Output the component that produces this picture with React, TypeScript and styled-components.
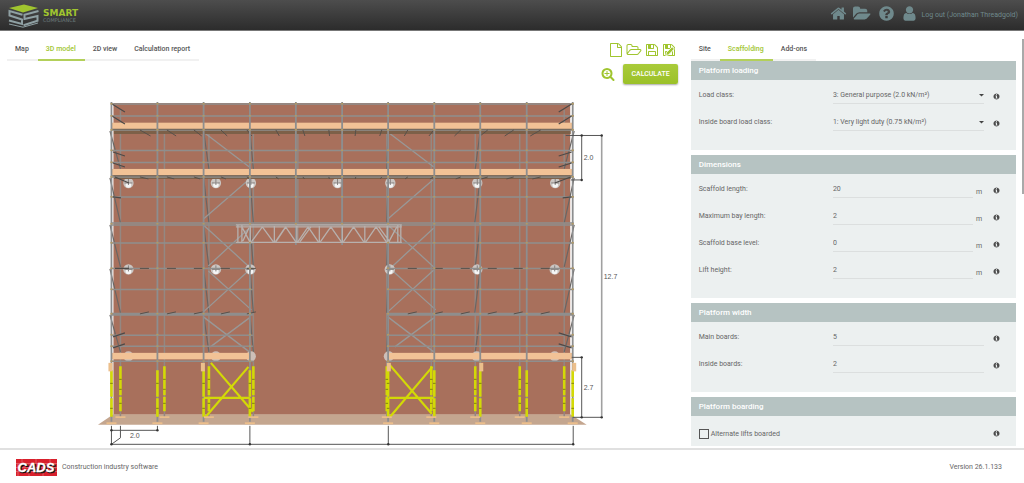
import React, { useState } from 'react';
import styled, { createGlobalStyle } from 'styled-components';

const GlobalStyle = createGlobalStyle`
  * { box-sizing: border-box; }
  body {
    margin: 0;
    background: #fff;
    color: #666;
    font-family: Roboto, "Liberation Sans", sans-serif;
    font-size: 7px;
    line-height: 9px;
  }
  button, input, select { font: inherit; color: inherit; }
`;

const green = '#a0c52f';

/* ---------- icons (1792 unit grid) ---------- */

const ring = 'm640 416q0 209-103 385.500t-279.500 279.500-385.500 103-385.500-103-279.500-279.500-103-385.500 103-385.500 279.500-279.500 385.500-103 385.500 103 279.500 279.500 103 385.500z';

const paths = {
  home: 'M1472 992v480q0 26-19 45t-45 19h-384v-384h-256v384h-384q-26 0-45-19t-19-45v-480q0-1 .5-3t.5-3l575-474 575 474q1 2 1 6zm223-69l-62 74q-8 9-21 11h-3q-13 0-21-7l-692-577-692 577q-12 8-24 7-13-2-21-11l-62-74q-8-10-7-23.500t11-21.500l719-599q32-26 76-26t76 26l244 204v-195q0-14 9-23t23-9h192q14 0 23 9t9 23v408l219 182q10 8 11 21.500t-7 23.500z',
  folder: 'M1879 952q0 31-31 66l-336 396q-43 51-120.500 86.500t-143.500 35.500h-1088q-34 0-60.500-13t-26.500-43q0-31 31-66l336-396q43-51 120.500-86.500t143.500-35.500h1088q34 0 60.500 13t26.500 43zm-343-344v160h-832q-94 0-197 47.500t-164 119.500l-337 396-5 6q0-4-.5-12.500t-.5-12.500v-960q0-92 66-158t158-66h320q92 0 158 66t66 158v32h544q92 0 158 66t66 158z',
  question: 'M1024 1376v-192q0-14-9-23t-23-9h-192q-14 0-23 9t-9 23v192q0 14 9 23t23 9h192q14 0 23-9t9-23zm256-672q0-88-55.500-163t-138.500-116-170-41q-243 0-371 213-15 24 8 42l132 100q7 6 19 6 16 0 25-12 53-68 86-92 34-24 86-24 48 0 85.500 26t37.500 59q0 38-20 61t-68 45q-63 28-115.500 86.500t-52.500 125.500v36q0 14 9 23t23 9h192q14 0 23-9t9-23q0-19 21.500-49.500t54.500-49.500q32-18 49-28.500t46-35 44.500-48 28-60.500 12.500-81zm384 192q0 209-103 385.500t-279.500 279.500-385.500 103-385.500-103-279.500-279.500-103-385.500 103-385.500 279.500-279.500 385.500-103 385.500 103 279.500 279.500 103 385.500z',
  user: 'M1536 1399q0 109-62.500 187t-150.500 78h-854q-88 0-150.500-78t-62.500-187q0-85 8.500-160.500t31.500-152 58.500-131 94-89 134.500-34.500q131 128 313 128t313-128q76 0 134.500 34.500t94 89 58.500 131 31.500 152 8.500 160.500zm-256-887q0 159-112.500 271.500t-271.500 112.500-271.500-112.500-112.500-271.500 112.500-271.500 271.500-112.500 271.500 112.500 112.500 271.500z',
  info: 'M1152 1376v-160q0-14-9-23t-23-9h-96v-512q0-14-9-23t-23-9h-320q-14 0-23 9t-9 23v160q0 14 9 23t23 9h96v320h-96q-14 0-23 9t-9 23v160q0 14 9 23t23 9h448q14 0 23-9t9-23zm-128-896v-160q0-14-9-23t-23-9h-192q-14 0-23 9t-9 23v160q0 14 9 23t23 9h192q14 0 23-9t9-23z' + ring,
  file: 'M1596 380q28 28 48 76t20 88v1152q0 40-28 68t-68 28h-1344q-40 0-68-28t-28-68v-1600q0-40 28-68t68-28h896q40 0 88 20t76 48zm-444-244v376h376q-10-29-22-41l-313-313q-12-12-41-22zm384 1528v-1024h-416q-40 0-68-28t-28-68v-416h-768v1536h1280z',
  folderOutline: 'M1845 931q0-35-53-35h-1088q-40 0-85.500 21.500t-71.500 52.500l-294 363q-18 24-18 40 0 35 53 35h1088q40 0 86-22t71-53l294-363q18-22 18-39zm-1141-163h768v-160q0-40-28-68t-68-28h-576q-40 0-68-28t-28-68v-64q0-40-28-68t-68-28h-320q-40 0-68 28t-28 68v853l256-315q44-53 116-87.500t140-34.500zm1269 163q0 62-46 120l-295 363q-43 53-116 87.500t-140 34.500h-1088q-92 0-158-66t-66-158v-960q0-92 66-158t158-66h320q92 0 158 66t66 158v32h544q92 0 158 66t66 158v160h192q54 0 99 24.500t67 70.500q15 32 15 68z',
  save: 'M512 1536h768v-384h-768v384zm896 0h128v-896q0-14-10-38.500t-20-34.500l-281-281q-10-10-34-20t-39-10v416q0 40-28 68t-68 28h-576q-40 0-68-28t-28-68v-416h-128v1280h128v-416q0-40 28-68t68-28h832q40 0 68 28t28 68v416zm-384-928v-320q0-13-9.500-22.500t-22.500-9.500h-192q-13 0-22.500 9.500t-9.500 22.500v320q0 13 9.500 22.500t22.500 9.500h192q13 0 22.500-9.500t9.500-22.500zm640 32v928q0 40-28 68t-68 28h-1344q-40 0-68-28t-28-68v-1344q0-40 28-68t68-28h928q40 0 88 20t76 48l280 280q28 28 48 76t20 88z',
  zoomIn: 'M1088 800v64q0 13-9.500 22.500t-22.500 9.500h-224v224q0 13-9.500 22.500t-22.500 9.500h-64q-13 0-22.500-9.500t-9.500-22.500v-224h-224q-13 0-22.500-9.500t-9.500-22.500v-64q0-13 9.500-22.500t22.500-9.500h224v-224q0-13 9.500-22.500t22.500-9.500h64q13 0 22.500 9.500t9.500 22.500v224h224q13 0 22.500 9.500t9.500 22.500zm128 32q0-185-131.500-316.500t-316.500-131.500-316.500 131.500-131.500 316.500 131.500 316.500 316.500 131.500 316.500-131.500 131.500-316.500zm512 832q0 53-37.500 90.500t-90.500 37.500q-54 0-90-38l-343-342q-179 124-399 124-143 0-273.500-55.500t-225-150-150-225-55.500-273.500 55.500-273.500 150-225 225-150 273.500-55.500 273.500 55.500 225 150 150 225 55.500 273.500q0 220-124 399l343 343q37 37 37 90z',
};

type IconName = keyof typeof paths;

function Icon({ name, size, wide = false, children }: { name: IconName; size: number; wide?: boolean; children?: React.ReactNode }) {
  const units = wide ? 2048 : 1792;
  return (
    <svg width={Math.round((size * units) / 1792)} height={size} viewBox={`0 0 ${units} 1792`} fill="currentColor" aria-hidden="true">
      <path d={paths[name]} />
      {children}
    </svg>
  );
}

/* ---------- shell ---------- */

const Shell = styled.div`
  display: flex;
  flex-direction: column;
  height: 100vh;
`;

const TopBar = styled.header`
  display: flex;
  flex: none;
  align-items: flex-start;
  justify-content: space-between;
  height: 31px;
  padding: 2px 6px 0 8px;
  background: linear-gradient(#4d4d4d, #2c2c2c);
  border-bottom: 1px solid #777;
`;

const TopNav = styled.nav`
  display: flex;
  align-items: center;
  gap: 6px;
  height: 22px;
`;

const TopLink = styled.a`
  display: flex;
  align-items: center;
  gap: 4px;
  color: #6f898c;
  text-decoration: none;
  svg { display: block; }
`;

const LinkText = styled.span`
  padding-top: 5px;
`;

const Workspace = styled.main`
  display: grid;
  flex: 1;
  grid-template-columns: minmax(0, 2fr) minmax(0, 1fr);
  min-height: 0;
  padding: 7px 0 2px;
`;

const ModelPane = styled.section`
  min-height: 0;
  overflow: hidden;
`;

const PaneHead = styled.div`
  display: flex;
  justify-content: space-between;
  padding: 0 7px;
`;

const TabBar = styled.div`
  display: flex;
`;

const Tab = styled.button<{ $active?: boolean }>`
  height: 23px;
  padding: 2px 9px 0 8px;
  background: none;
  border: 0;
  border-bottom: 2px solid ${(p) => (p.$active ? '#b3d05a' : '#f1f1f1')};
  color: ${(p) => (p.$active ? green : '#555')};
  font-weight: 500;
  cursor: pointer;
`;

const Tools = styled.div`
  display: flex;
  align-items: center;
  gap: 3px;
`;

const ToolButton = styled.button`
  display: flex;
  padding: 0;
  background: none;
  border: 0;
  color: ${green};
  cursor: pointer;
`;

const ActionRow = styled.div`
  display: flex;
  align-items: center;
  justify-content: flex-end;
  gap: 8px;
  margin: 3px 5px 6px 0;
`;

const CalculateButton = styled.button`
  height: 20px;
  padding: 0 8px;
  background: linear-gradient(#a9cb3a, #9bc128);
  border: 0;
  border-radius: 2px;
  box-shadow: 0 1px 2px rgba(0, 0, 0, 0.35);
  color: #fff;
  font-weight: 500;
  cursor: pointer;
`;

const Drawing = styled.svg`
  display: block;
  width: 100%;
  height: auto;
`;

const SettingsPane = styled.section`
  display: flex;
  gap: 6px;
  min-height: 0;
  padding-left: 8px;
`;

const SettingsScroll = styled.div`
  flex: 1;
  min-width: 0;
  overflow-y: auto;
  scrollbar-width: none;
`;

const ScrollRail = styled.div`
  width: 2px;
  padding-top: 1px;
`;

const ScrollThumb = styled.div`
  height: 38%;
  background: #a9a9a9;
`;

const Group = styled.section`
  margin-bottom: 5px;
  background: #ecf0f0;
`;

const GroupTitle = styled.h2`
  height: 19px;
  margin: 0;
  padding: 0 8px;
  background: #b6c3c2;
  color: #fff;
  font-size: 8px;
  font-weight: 500;
  line-height: 19px;
`;

const GroupBody = styled.div`
  padding: 2px 16px 14px 8px;
`;

const Row = styled.div`
  display: grid;
  grid-template-columns: minmax(0, 8fr) minmax(0, 9fr) 16px;
  align-items: center;
  height: 27px;
`;

const CheckRow = styled.div`
  display: flex;
  align-items: center;
  justify-content: space-between;
  height: 32px;
`;

const CheckLabel = styled.label`
  display: flex;
  align-items: center;
  gap: 2px;
`;

const CheckBox = styled.input`
  width: 10px;
  height: 10px;
  margin: 0;
  appearance: none;
  border: 1px solid #555;
  &:checked { background: ${green}; }
`;

const Field = styled.div`
  display: flex;
  align-items: center;
`;

const TextInput = styled.input`
  flex: 1;
  min-width: 0;
  height: 17px;
  padding: 0;
  background: none;
  border: 0;
  border-bottom: 1px solid #dcdfdf;
  outline: 0;
`;

const Unit = styled.span`
  width: 11px;
  padding: 5px 0 0 3px;
`;

const SelectInput = styled.select`
  flex: 1;
  min-width: 0;
  height: 17px;
  padding: 0;
  appearance: none;
  background: none;
  border: 0;
  border-bottom: 1px solid #dcdfdf;
  outline: 0;
`;

const SelectField = styled.div`
  display: grid;
  > * { grid-area: 1 / 1; }
  > svg {
    align-self: center;
    justify-self: end;
    pointer-events: none;
  }
`;

const InfoButton = styled.button<{ $raised?: boolean }>`
  display: flex;
  justify-content: flex-end;
  padding: ${(p) => (p.$raised ? '0 0 2px' : '2px 0 0')};
  background: none;
  border: 0;
  color: #4c4c4c;
`;

const BottomBar = styled.footer`
  display: flex;
  flex: none;
  align-items: center;
  justify-content: space-between;
  height: 35px;
  padding: 2px 22px 0 16px;
  border-top: 2px solid #e0e0e0;
`;

const Company = styled.div`
  display: flex;
  align-items: center;
  gap: 5px;
`;

/* ---------- logos ---------- */

function SmartLogo() {
  return (
    <svg width="74" height="26" viewBox="0 0 74 26" role="img" aria-label="Smart Compliance">
      <path d="M1 6 16 2.500l14 3.500-15 4.500z" fill={green} />
      <g fill="none" stroke="#8fa0a3" strokeWidth="2">
        <path d="M14.500 12.700 1.500 9v4.500l12.500 4V22L1 18.500" />
        <path d="M30.500 9 16.500 12.700V17l13-3v4.700l-14 4.500" />
        <path d="m1 22 14 3.200L30 21" strokeWidth="1" />
      </g>
      <text x="35" y="14" fill={green} fontFamily="DejaVu Sans, sans-serif" fontSize="9" fontWeight="700">SMART</text>
      <text x="35" y="20" fill="#6c7b7e" fontFamily="DejaVu Sans, sans-serif" fontSize="5">COMPLIANCE</text>
    </svg>
  );
}

function CadsLogo() {
  return (
    <svg width="41" height="17" viewBox="0 0 41 17" role="img" aria-label="CADS">
      <rect width="41" height="17" fill="#d8202c" />
      <path d="M0 4.500h41M0 8.500h41M0 12.500h41M6 0v4M20 0v4M34 0v4M2 5v3M38 5v3M2 13v4M13 13v4M27 13v4M38 9v3" stroke="#e98287" strokeWidth=".6" />
      <g fontFamily="Liberation Sans, sans-serif" fontSize="13" fontWeight="700" fontStyle="italic" textAnchor="middle">
        <text x="21" y="14" fill="#111" stroke="#111" strokeWidth=".7">CADS</text>
        <text x="20" y="13" fill="#fff" stroke="#fff" strokeWidth=".3">CADS</text>
      </g>
    </svg>
  );
}

/* ---------- scaffold elevation ---------- */

type Seg = [number, number, number, number];

const toPath = (segs: Seg[]) => segs.map(([a, b, c, d]) => `M${a} ${b}L${c} ${d}`).join('');

const front = [111.5, 157.500, 203.700, 250, 296, 342.300, 388.300, 434.500, 480.500, 527, 573];
const back = [120.500, 164.500, 209, 253.500, 298, 342.500, 387, 431.500, 475.500, 520, 564.500];
const fullLedgers = [104, 116, 130, 150.500, 162.500, 177, 197, 223, 225];
const sideLedgers = [243, 268.500, 289.500, 313.500, 315, 335.300, 346.500, 361.500];
const liftTops = [131, 178, 225, 269, 315];
const overOpening = (i: number) => i === 4 || i === 5;

const frontPosts: Seg[] = front.map((x, i) => [x, 102, x, overOpening(i) ? 245 : 422]);
const backPosts: Seg[] = back.map((x, i) => [x, i === 0 || i === 10 ? 110 : 134, x, overOpening(i) ? 243 : 417]);
const ledgers: Seg[] = [
  ...fullLedgers.map((y): Seg => [111, y, 574, y]),
  ...sideLedgers.flatMap((y): Seg[] => [[111, y, 253, y], [387, y, 574, y]]),
];

const rakers: Seg[] = liftTops.flatMap((y, k) => {
  const end = k < 4 ? liftTops[k + 1] - 9 + (k > 0 ? 7 : 0) : 352;
  return [0, 2, 3, 6, 8, 10].map((i): Seg => {
    const lean = i === 0 ? 1.500 : i === 10 ? -1.500 : 0;
    return i === 8 && k % 2 === 1 ? [front[i], y, back[i] - 0.500, end] : [front[i] - lean, y, back[i], end];
  });
});

const faceBraces: Seg[] = [203.500, 388].flatMap((x): Seg[] => [
  [x, 132, x + 46, 167],
  [x, 219, x + 45, 180],
  [x, 225, x + 47, 268],
  [x + 5, 266, x + 46, 228],
  [x + 5, 271, x + 48, 310],
  [x, 312, x + 46, 270],
  [x, 317, x + 46, 352],
  [x + 7, 347, x + 46, 318],
]);

const transomEnds: Seg[] = [
  ...[104, 116].flatMap((y): Seg[] => [[112, y, 125, y + 8], [572, y, 559, y + 8]]),
  ...[152, 163].flatMap((y): Seg[] => [[113, y, 125, y + 4], [572, y, 559, y + 4]]),
  ...[337, 348].flatMap((y): Seg[] => [[113, y, 125, y - 4], [572, y, 559, y - 4]]),
  [115, 177, 129, 183], [571, 177, 555, 183],
  [115, 268.500, 129, 268.500], [113, 197, 121, 198], [572, 197, 563, 198],
];

const transomXs = [140, 167, 194, 221, 247, 276, 303, 329, 356, 382, 408, 434, 461, 488, 514, 541];
const transomTicks: Seg[] = transomXs.flatMap((x): Seg[] => {
  const lean = (342 - x) / 19;
  const pair: Seg[] = [[x, 130, x + lean, 136], [x, 177, x + lean * 0.8, 179]];
  const low: Seg[] = x < 250 || x > 388 ? [[x, 268.500, x + 9, 268.500], [x, 314, x + 9, 312]] : [];
  return [...pair, ...low];
});

const couplerYs = [104, 116, 130, 150.500, 162.500, 177, 197, 224];
const lowCouplerYs = [243, 268.500, 289.500, 314, 335, 346.500, 361.500];

const baseFront = front.filter((_, i) => !overOpening(i));
const baseBack = back.filter((_, i) => !overOpening(i));

const girderNodes = [250.500, 274.500, 297, 319.500, 342.500, 365, 387.500];
const girderWeb: Seg[] = [
  ...girderNodes.slice(0, -1).flatMap((x, i): Seg[] => {
    const peak = (x + girderNodes[i + 1]) / 2;
    return [[x + 1, 242, peak, 227], [peak, 227, girderNodes[i + 1] - 1, 242]];
  }),
  ...girderNodes.map((x): Seg => [x, 226, x, 243]),
  [238, 225, 238, 243], [242, 225, 242, 243], [242, 227, 250, 242], [243, 241, 249, 228],
  [398, 225, 398, 243], [401, 225, 401, 243], [397, 227, 389, 242], [379, 227, 390, 242],
  [286, 227, 276, 242], [311, 227, 300, 242],
];

const anchors: [number, number][] = [
  ...[128.500, 216, 251, 337.700, 390.500, 477.500, 555.500].map((x): [number, number] => [x, 183]),
  ...[128.500, 216, 250.500, 390, 477.500, 555].map((x): [number, number] => [x, 269.500]),
];
const lowAnchors = [128.500, 216, 251, 389, 477, 555];

const dimDots: [number, number][] = [
  [582, 135.500], [602, 135.500], [582, 180], [582, 357.500], [582, 417.500], [602, 417.500],
  [111.5, 444.500], [250, 444.500], [388.500, 444.500], [573.500, 444.500], [111.5, 430.500], [157.500, 430.500],
];

function ScaffoldModel() {
  return (
    <Drawing viewBox="0 90 683 356" role="img" aria-label="3D model of the scaffold">
      <rect x="113.500" y="103" width="457" height="312" fill="#a8705c" />
      <path d="M98 425 113.500 414.500H570.500L587 425z" fill="#c4a68f" />

      <g fill="none">
        <path d={toPath(backPosts)} stroke="#948882" strokeWidth="1.500" />
        <path d={toPath(rakers)} stroke="#6a6664" strokeWidth="1.200" />
        <path d={toPath(faceBraces)} stroke="#999897" strokeWidth="1.300" />
      </g>

      <g>
        {lowAnchors.map((x) => <circle key={x} cx={x} cy="356.500" r="5" fill="#cdbfb8" />)}
        {anchors.map(([x, y]) => (
          <g key={`${x}-${y}`}>
            <circle cx={x} cy={y} r="5.200" fill="#cbc6c3" />
            <circle cx={x} cy={y + 2} r="2.800" fill="#f5f5f5" />
            <path d={`M${x} ${y - 4}V${y + 2}M${x - 4} ${y}H${x + 4}`} stroke="#85807e" strokeWidth="1" />
          </g>
        ))}
      </g>

      <g fill="#7d6048">
        <rect x="114" y="130" width="457" height="4" />
        <rect x="114" y="176" width="457" height="3" />
      </g>
      <path d={toPath(ledgers)} stroke="#8f8e8d" strokeWidth="1.500" fill="none" />
      <g fill="#f2c296">
        <rect x="112" y="122.700" width="461" height="6.300" />
        <rect x="112" y="169" width="461" height="6.300" />
        <rect x="112" y="353" width="139" height="6.500" />
        <rect x="388.500" y="353" width="184" height="6.500" />
      </g>
      <path d="M112 129.300H573M112 175.800H573" stroke="#6d6458" strokeWidth="1" />
      <path d={toPath(transomEnds)} stroke="#4d4a48" strokeWidth="1.200" />
      <path d={toPath(transomTicks)} stroke="#57504a" strokeWidth="1" />
      <path d={toPath(frontPosts)} stroke="#8d8e8f" strokeWidth="1.800" />

      <g fill="none" stroke="#b7b1ae">
        <path d="M236 225H402M236 227H402M236 242.500H402" strokeWidth="1.200" />
        <path d={toPath(girderWeb)} strokeWidth="1.300" />
      </g>

      <g fill="#b39a63">
        {front.flatMap((x, i) =>
          [...couplerYs, ...(overOpening(i) ? [] : lowCouplerYs)].map((y) => (
            <rect key={`${x}-${y}`} x={x - 1} y={y - 1} width="2" height="1.600" />
          )),
        )}
      </g>

      <g stroke="#d3d906" strokeWidth="2.600" fill="none">
        {baseBack.map((x) => <path key={x} d={`M${x} 366.500V395.500M${x} 397V411.500`} />)}
        {baseFront.map((x) => <path key={x} d={`M${x} 370.500V397M${x} 398.500V417`} />)}
        <path d="M211 363 253 412M248.500 367 205 418M204 398H250M389 364 432 414M432.500 367 389.500 418M389 398H434" strokeWidth="2.200" />
      </g>
      <g stroke="#85860c" strokeWidth="1">
        {baseFront.map((x) => <path key={x} d={`M${x - 1.3} 383.500H${x + 1.3}M${x - 1.3} 408.500H${x + 1.3}`} />)}
        {baseBack.map((x) => <path key={x} d={`M${x - 1.3} 379.500H${x + 1.3}M${x - 1.3} 389.500H${x + 1.3}M${x - 1.3} 403.500H${x + 1.3}`} />)}
      </g>
      <g fill="#ecbf8b">
        {[110.500, 203, 389, 481.500, 574.500].map((x) => <rect key={x} x={x - 2} y="363" width="4" height="8.500" />)}
        {baseBack.map((x) => <rect key={x} x={x - 5} y="416.500" width="10" height="1.600" />)}
        {baseFront.map((x) => <rect key={x} x={x - 5} y="422.500" width="10" height="1.800" />)}
      </g>

      <path
        d="M566 135.500H602M582 135.500V180M571 180H582M572 357.500H582M582 357.500V417.500M573 417.500H602M111.500 426V444.500H573.500V426M250 426V444.500M388.500 426V444.500M120.500 426V438L111.500 444.500M111.500 430.500H157.500V426"
        stroke="#555"
        strokeWidth="1"
        fill="none"
      />
      <path d="M602 135.500V417.500" stroke="#a0a0a0" strokeWidth="1.600" />
      <g fill="#333">
        {dimDots.map(([x, y]) => <circle key={`${x}-${y}`} cx={x} cy={y} r="1.200" />)}
      </g>
      <g fill="#555" fontFamily="Liberation Sans, sans-serif" fontSize="7">
        <text x="584" y="160">2.0</text>
        <text x="604" y="279">12.7</text>
        <text x="584" y="390">2.7</text>
        <text x="130" y="438">2.0</text>
      </g>
    </Drawing>
  );
}

/* ---------- form parts ---------- */

function Info({ about, raised }: { about: string; raised?: boolean }) {
  return (
    <InfoButton type="button" aria-label={`About ${about}`} $raised={raised}>
      <Icon name="info" size={7} />
    </InfoButton>
  );
}

function SelectRow({ id, label, value }: { id: string; label: string; value: string }) {
  return (
    <Row>
      <label htmlFor={id}>{label}</label>
      <SelectField>
        <SelectInput id={id} defaultValue={value}>
          <option>{value}</option>
        </SelectInput>
        <svg width="5" height="3" viewBox="0 0 5 3" aria-hidden="true"><path d="M0 0h5L2.500 2.500z" fill="#444" /></svg>
      </SelectField>
      <Info about={label} />
    </Row>
  );
}

function NumberRow({ id, label, value, unit }: { id: string; label: string; value: string; unit?: string }) {
  return (
    <Row>
      <label htmlFor={id}>{label}</label>
      <Field>
        <TextInput id={id} defaultValue={value} inputMode="decimal" />
        {unit && <Unit>{unit}</Unit>}
      </Field>
      <Info about={label} />
    </Row>
  );
}

function Tabs({ names, initial }: { names: string[]; initial: string }) {
  const [current, setCurrent] = useState(initial);
  return (
    <TabBar role="tablist">
      {names.map((name) => (
        <Tab key={name} type="button" role="tab" aria-selected={name === current} $active={name === current} onClick={() => setCurrent(name)}>
          {name}
        </Tab>
      ))}
    </TabBar>
  );
}

export default function App() {
  return (
    <Shell>
      <GlobalStyle />
      <TopBar>
        <SmartLogo />
        <TopNav>
          <TopLink href="#home" aria-label="Home"><Icon name="home" size={17} /></TopLink>
          <TopLink href="#projects" aria-label="Projects"><Icon name="folder" size={17} wide /></TopLink>
          <TopLink href="#help" aria-label="Help"><Icon name="question" size={17} /></TopLink>
          <TopLink href="#logout">
            <Icon name="user" size={17} />
            <LinkText>Log out (Jonathan Threadgold)</LinkText>
          </TopLink>
        </TopNav>
      </TopBar>

      <Workspace>
        <ModelPane>
          <PaneHead>
            <Tabs names={['Map', '3D model', '2D view', 'Calculation report']} initial="3D model" />
            <Tools>
              <ToolButton type="button" aria-label="New"><Icon name="file" size={14} /></ToolButton>
              <ToolButton type="button" aria-label="Open"><Icon name="folderOutline" size={14} wide /></ToolButton>
              <ToolButton type="button" aria-label="Save"><Icon name="save" size={14} /></ToolButton>
              <ToolButton type="button" aria-label="Save as">
                <Icon name="save" size={14}>
                  <path d="M480 1600 560 1220 1300 480 1580 760 840 1520z" stroke="#fff" strokeWidth="110" />
                </Icon>
              </ToolButton>
            </Tools>
          </PaneHead>
          <ActionRow>
            <ToolButton type="button" aria-label="Zoom in"><Icon name="zoomIn" size={14} /></ToolButton>
            <CalculateButton type="button">CALCULATE</CalculateButton>
          </ActionRow>
          <ScaffoldModel />
        </ModelPane>

        <SettingsPane>
          <SettingsScroll>
            <Tabs names={['Site', 'Scaffolding', 'Add-ons']} initial="Scaffolding" />
            <Group>
              <GroupTitle>Platform loading</GroupTitle>
              <GroupBody>
                <SelectRow id="load-class" label="Load class:" value="3: General purpose (2.0 kN/m²)" />
                <SelectRow id="inside-load-class" label="Inside board load class:" value="1: Very light duty (0.75 kN/m²)" />
              </GroupBody>
            </Group>
            <Group>
              <GroupTitle>Dimensions</GroupTitle>
              <GroupBody>
                <NumberRow id="length" label="Scaffold length:" value="20" unit="m" />
                <NumberRow id="bay" label="Maximum bay length:" value="2" unit="m" />
                <NumberRow id="base" label="Scaffold base level:" value="0" unit="m" />
                <NumberRow id="lift" label="Lift height:" value="2" unit="m" />
              </GroupBody>
            </Group>
            <Group>
              <GroupTitle>Platform width</GroupTitle>
              <GroupBody>
                <NumberRow id="main-boards" label="Main boards:" value="5" />
                <NumberRow id="inside-boards" label="Inside boards:" value="2" />
              </GroupBody>
            </Group>
            <Group>
              <GroupTitle>Platform boarding</GroupTitle>
              <GroupBody>
                <CheckRow>
                  <CheckLabel>
                    <CheckBox type="checkbox" />
                    Alternate lifts boarded
                  </CheckLabel>
                  <Info about="Alternate lifts boarded" raised />
                </CheckRow>
              </GroupBody>
            </Group>
          </SettingsScroll>
          <ScrollRail aria-hidden="true"><ScrollThumb /></ScrollRail>
        </SettingsPane>
      </Workspace>

      <BottomBar>
        <Company>
          <CadsLogo />
          Construction industry software
        </Company>
        <span>Version 26.1.133</span>
      </BottomBar>
    </Shell>
  );
}
